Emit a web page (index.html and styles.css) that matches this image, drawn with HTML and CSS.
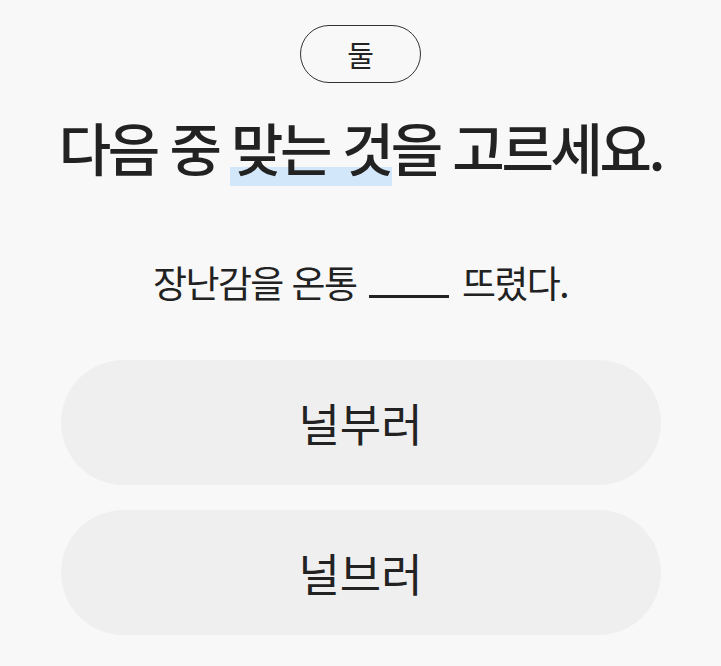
FILE: index.html
```html
<!DOCTYPE html>
<html lang="ko">
<head>
    <meta charset="UTF-8">
    <meta name="viewport" content="width=device-width, initial-scale=1.0">
    <title>맞춤법 퀴즈</title>
    <link rel="stylesheet" href="styles.css">
</head>
<body>
    <div class="quiz">
        <div class="step">둘</div>

        <h1 class="question">다음 중 <span class="mark">맞는 것</span>을 고르세요.</h1>

        <p class="sentence">장난감을 온통 <span class="blank"></span> 뜨렸다.</p>

        <div class="choices">
            <button class="choice">널부러</button>
            <button class="choice">널브러</button>
        </div>
    </div>
</body>
</html>
```

FILE: styles.css
```css
body {
    margin: 0;
    background-color: #f8f8f8;
    font-family: "Noto Sans CJK KR", "Noto Sans", sans-serif;
    color: #222;
}
.quiz {
    width: 600px;
    margin: 0 auto;
    padding-top: 25px;
    display: flex;
    flex-direction: column;
    align-items: center;
}
.step {
    width: 119px;
    height: 56px;
    border: 1px solid #333;
    border-radius: 30px;
    display: flex;
    justify-content: center;
    align-items: center;
    font-size: 29px;
}
.question {
    margin: 27px 0 0;
    font-size: 57px;
    font-weight: 500;
    letter-spacing: -3.4px;
    line-height: 72px;
    white-space: nowrap;
}
.mark {
    position: relative;
}
.mark::after {
    content: "";
    position: absolute;
    left: -1px;
    right: -1px;
    bottom: 1px;
    height: 19px;
    background-color: #d3e7fb;
    z-index: -1;
}
.sentence {
    margin: 75px 0 0;
    font-size: 37px;
    line-height: 50px;
    letter-spacing: -1.6px;
}
.blank {
    display: inline-block;
    width: 80px;
    margin: 0 4px;
    border-bottom: 3px solid #222;
}
.choices {
    margin-top: 53px;
    width: 100%;
    display: flex;
    flex-direction: column;
    gap: 25px;
}
.choice {
    height: 125px;
    border: none;
    border-radius: 63px;
    background-color: #efefef;
    font-family: inherit;
    font-size: 45px;
    color: #222;
    cursor: pointer;
}
```
